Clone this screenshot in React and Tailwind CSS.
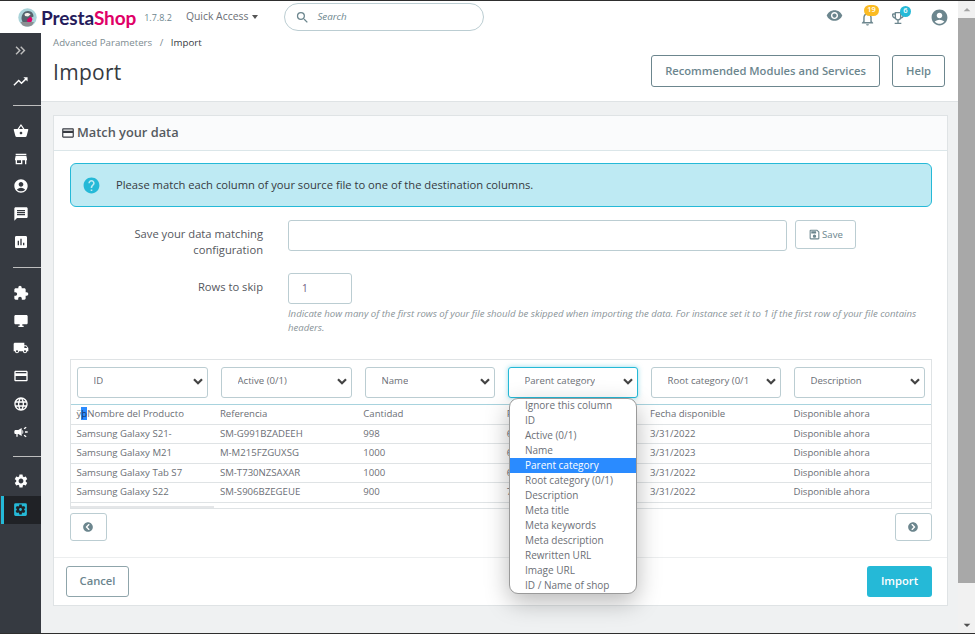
import React from "react";
import {
  MdKeyboardDoubleArrowRight, MdTrendingUp, MdShoppingBasket, MdStore, MdAccountCircle, MdMessage, MdAssessment,
  MdExtension, MdDesktopWindows, MdLocalShipping, MdCreditCard, MdLanguage, MdCampaign, MdSettings, MdSettingsApplications,
  MdVisibility, MdOutlineNotifications, MdOutlineEmojiEvents, MdHelp, MdOutlineSave, MdSearch, MdArrowDropDown, MdArrowDropUp,
} from "react-icons/md";
import { FaChevronCircleLeft, FaChevronCircleRight } from "react-icons/fa";

const font = { fontFamily: '"Open Sans", sans-serif' };

function Logo() {
  return (
    <svg width="19" height="19" viewBox="0 0 19 19" className="shrink-0">
      <circle cx="9.5" cy="9.5" r="9.2" fill="#a9d3d9" />
      <path d="M3.500 11c0-4.500 2.500-8 6.500-8s5.500 3 5.500 5.500c-1 .5-2 1-3 2L10 14H4.500z" fill="#56636d" />
      <path d="M6.500 6c1.500-1.500 4.500-1.500 6 .5L10 8.500 7 8z" fill="#f4f1ea" />
      <path d="M9 11.500l3.500-3 2 2.500-1.500 4H9.500z" fill="#df0067" />
      <path d="M2.500 14h13.500l-1.800 3.200c-3 1.800-7 1.800-9.800 0z" fill="#8c8f92" />
    </svg>
  );
}

function Chevron() {
  return (
    <svg width="10" height="7" viewBox="0 0 10 7" className="shrink-0">
      <path d="M1 1.300L5 5.300L9 1.300" fill="none" stroke="#444" strokeWidth="2.200" />
    </svg>
  );
}

const sideGroups = [
  [MdShoppingBasket, MdStore, MdAccountCircle, MdMessage, MdAssessment],
  [MdExtension, MdDesktopWindows, MdLocalShipping, MdCreditCard, MdLanguage, MdCampaign],
];

function SideIcon({ Icon }) {
  return (
    <div className="h-[27.800px] flex items-center justify-center">
      <Icon className="text-white" size={16} />
    </div>
  );
}

function Sidebar() {
  return (
    <aside className="w-[41px] shrink-0 bg-[#363a41] flex flex-col">
      <div className="h-[33px] mt-[1px] flex items-center justify-center">
        <MdKeyboardDoubleArrowRight className="text-[#bebebe]" size={17} />
      </div>
      <div className="h-[28px] flex items-center justify-center">
        <MdTrendingUp className="text-white" size={17} />
      </div>
      <div className="h-[1px] bg-[#bebebe] ml-[13px] mt-[10px] mb-[11px]" />
      {sideGroups[0].map((I, i) => <SideIcon key={i} Icon={I} />)}
      <div className="h-[1px] bg-[#bebebe] ml-[13px] mt-[11px] mb-[11px]" />
      {sideGroups[1].map((I, i) => <SideIcon key={i} Icon={I} />)}
      <div className="h-[1px] bg-[#bebebe] ml-[13px] mt-[10px] mb-[10px]" />
      <SideIcon Icon={MdSettings} />
      <div className="h-[28px] mt-[1px] ml-[1px] bg-[#202226] border-l-[3px] border-[#25b9d7] flex items-center justify-center pr-[4px]">
        <MdSettingsApplications className="text-[#25b9d7]" size={17} />
      </div>
    </aside>
  );
}

function Header() {
  return (
    <header className="h-[32px] shrink-0 bg-white flex items-center relative">
      <div className="ml-[18px] flex items-center">
        <Logo />
        <span className="ml-[4px] text-[19px] font-bold tracking-[-0.1px] leading-none" style={{ fontFamily: "Lato, sans-serif" }}>
          <span className="text-[#251b5b]">Presta</span><span className="text-[#df0067]">Shop</span>
        </span>
      </div>
      <span className="ml-[8px] text-[9px] text-[#6c868e] mt-[2px]">1.7.8.2</span>
      <span className="ml-[14px] text-[10.400px] text-[#6c6f76] flex items-center">
        Quick Access
        <span className="ml-[4px] w-0 h-0 border-x-[3.500px] border-x-transparent border-t-[4px] border-t-[#555]" />
      </span>
      <div className="ml-[26px] w-[200px] h-[28px] rounded-full border border-[#bbcdd2] flex items-center pl-[10px]">
        <MdSearch className="text-[#6c868e]" size={15} />
        <span className="ml-[7px] mt-[1px] text-[9.800px] italic text-[#6c868e]">Search</span>
      </div>
      <div className="ml-auto flex items-center mr-[9px] text-[#6c868e]">
        <MdVisibility size={17} className="mr-[16px] -mt-[3px]" />
        <div className="relative mr-[14px] mt-[2px]">
          <MdOutlineNotifications size={17} />
          <span className="absolute -top-[5px] left-[5px] w-[15px] h-[11px] rounded-full bg-[#fbbb22] text-white text-[7.500px] font-semibold flex items-center justify-center">19</span>
        </div>
        <div className="relative mr-[24px] mt-[1px]">
          <MdOutlineEmojiEvents size={16} />
          <span className="absolute -top-[4px] left-[10px] w-[11px] h-[11px] rounded-full bg-[#25b9d7] text-white text-[7.500px] font-semibold flex items-center justify-center">6</span>
        </div>
        <MdAccountCircle size={19} />
      </div>
    </header>
  );
}

function PageHead() {
  return (
    <div className="h-[69px] shrink-0 bg-white border-b border-[#dfe3e5] flex justify-between pl-[12px] pr-[13px]">
      <div>
        <div className="mt-[3px] text-[9.700px] leading-[14px] text-[#7d8b91]">
          Advanced Parameters <span className="mx-[5px]">/</span> <span className="text-[#363a41]">Import</span>
        </div>
        <h1 className="mt-[8px] text-[21px] leading-[28px] text-[#363a41] tracking-[0.3px]">Import</h1>
      </div>
      <div className="flex gap-[12px] mt-[22px]">
        <button className="w-[229px] h-[32px] rounded-[3px] border border-[#6c868e] text-[11.200px] font-semibold text-[#6c868e]">Recommended Modules and Services</button>
        <button className="w-[53px] h-[32px] rounded-[3px] border border-[#6c868e] text-[11.200px] font-semibold text-[#6c868e]">Help</button>
      </div>
    </div>
  );
}

function Select({ label, active, w }) {
  return (
    <div className={`h-[31px] ${w} rounded-[3px] bg-white border flex items-center justify-between pl-[15.500px] pr-[4px] pb-[1px] text-[9.600px] text-[#6c6f76] ${active ? "border-[#25b9d7] shadow-[0_0_5px_rgba(37,185,215,0.5)]" : "border-[#bbcdd2]"}`}>
      <span className="whitespace-nowrap overflow-hidden">{label}</span>
      <span className="ml-[8px] shrink-0"><Chevron /></span>
    </div>
  );
}

const rows = [
  ["Samsung Galaxy S21-", "SM-G991BZADEEH", "998", "6", "3/31/2022", "Disponible ahora"],
  ["Samsung Galaxy M21", "M-M215FZGUXSG", "1000", "6", "3/31/2023", "Disponible ahora"],
  ["Samsung Galaxy Tab S7", "SM-T730NZSAXAR", "1000", "6", "3/31/2022", "Disponible ahora"],
  ["Samsung Galaxy S22", "SM-S906BZEGEUE", "900", "7", "3/31/2022", "Disponible ahora"],
];

const options = ["Ignore this column", "ID", "Active (0/1)", "Name", "Parent category", "Root category (0/1)", "Description", "Meta title", "Meta keywords", "Meta description", "Rewritten URL", "Image URL", "ID / Name of shop"];

function Row({ cells }) {
  return (
    <div className="grid grid-cols-[repeat(6,143.400px)] h-[19.500px] border-b border-[#dfe3e5] items-center pl-[5.500px] text-[9.600px] text-[#6c6f76] whitespace-nowrap">
      {cells.map((c, i) => <div key={i}>{c}</div>)}
    </div>
  );
}

function DataTable() {
  return (
    <div className="mt-[24px] ml-[16px] mr-[15px] relative">
      <div className="border border-[#dfe3e5] h-[150px] relative overflow-hidden">
        <div className="h-[45px] border-b border-[#a8d3de] flex items-center justify-between px-[6px]">
          <Select w="w-[131px]" label="ID" />
          <Select w="w-[131px]" label="Active (0/1)" />
          <Select w="w-[130px]" label="Name" />
          <Select w="w-[130px]" label="Parent category" active />
          <Select w="w-[130px]" label="Root category (0/1" />
          <Select w="w-[131px]" label="Description" />
        </div>
        <Row cells={[<span><span>ÿ</span><span className="inline-block leading-[13px] bg-[#2a8bff] text-[#1a3a6a]">þ</span>Nombre del Producto</span>, "Referencia", "Cantidad", "P", "Fecha disponible", "Disponible ahora"]} />
        {rows.map((r, i) => <Row key={i} cells={r} />)}
        <div className="absolute left-0 bottom-0 w-[143px] h-[2px] bg-[#e4e6e8]" />
      </div>
      <div className="absolute z-10 left-[438.500px] top-[39px] w-[128.500px] h-[195.500px] bg-white rounded-[9px] border border-[#9a9a9a] shadow-[0_8px_24px_rgba(0,0,0,0.28)] overflow-hidden text-[10px] text-[#6c6f76]">
        <div className="-mt-[1px] -ml-[1px]">
          {options.map((o) => (
            <div key={o} className={`h-[15px] leading-[15px] pl-[16.500px] whitespace-nowrap ${o === "Parent category" ? "bg-[#2a8bff] text-white" : ""}`}>{o}</div>
          ))}
        </div>
      </div>
    </div>
  );
}

function Card() {
  return (
    <section className="mt-[13px] ml-[12px] mr-[10px] h-[491px] bg-white border border-[#dfe3e5] flex flex-col">
      <div className="h-[35px] shrink-0 bg-[#fafbfc] border-b border-[#dbe6e9] flex items-center pl-[7px] text-[#363a41]">
        <MdCreditCard size={14} />
        <span className="ml-[2px] text-[12.800px] font-semibold text-[#555a60]">Match your data</span>
      </div>
      <div className="mt-[12px] ml-[16px] mr-[15px] h-[44px] shrink-0 rounded-[6px] bg-[#beeaf3] border border-[#25b9d7] flex items-center pl-[11px]">
        <MdHelp size={19} className="text-[#25b9d7]" />
        <span className="ml-[15px] text-[11.200px] text-[#363a41]">Please match each column of your source file to one of the destination columns.</span>
      </div>
      <div className="mt-[13px] flex items-start">
        <label className="w-[209px] text-right text-[11.200px] leading-[16px] text-[#55585e] pt-[6px]">Save your data matching<br />configuration</label>
        <div className="ml-[25px] w-[499px] h-[31px] rounded-[3px] border border-[#bbcdd2]" />
        <button className="ml-[8px] w-[61px] h-[29px] rounded-[3px] border border-[#bbcdd2] flex items-center justify-center text-[9.600px] text-[#6c868e]">
          <MdOutlineSave size={13} className="mr-[1px]" /><span className="mt-[1px]">Save</span>
        </button>
      </div>
      <div className="mt-[15px] flex items-start">
        <label className="w-[209px] text-right text-[11.200px] leading-[16px] text-[#55585e] pt-[6px]">Rows to skip</label>
        <div className="ml-[25px]">
          <div className="w-[64px] h-[31px] rounded-[3px] border border-[#bbcdd2] flex items-center pl-[13px] text-[10px] text-[#6c5a80]">1</div>
        </div>
      </div>
      <p className="mt-[3px] ml-[234px] mr-[30px] text-[9.600px] leading-[14px] italic text-[#8a9499]">
        Indicate how many of the first rows of your file should be skipped when importing the data. For instance set it to 1 if the first row of your file contains headers.
      </p>
      <DataTable />
      <div className="mt-[4px] ml-[16px] mr-[15px] flex justify-between">
        <button className="w-[37px] h-[28px] rounded-[3px] border border-[#bbcdd2] flex items-center justify-center pr-[1px] text-[#6c868e]"><FaChevronCircleLeft size={10} /></button>
        <button className="w-[37px] h-[28px] rounded-[3px] border border-[#bbcdd2] flex items-center justify-center pr-[1px] text-[#6c868e]"><FaChevronCircleRight size={10} /></button>
      </div>
      <div className="mt-[16px] flex-1 border-t border-[#eceeef] flex items-start justify-between pt-[8px] pl-[12px] pr-[15px]">
        <button className="w-[63px] h-[31px] rounded-[3px] border border-[#8fa5ab] text-[11.200px] font-semibold text-[#6c868e]">Cancel</button>
        <button className="w-[65px] h-[31px] rounded-[3px] bg-[#25b9d7] text-[11.200px] font-semibold text-white">Import</button>
      </div>
    </section>
  );
}

function Scrollbar() {
  return (
    <div className="w-[17px] shrink-0 bg-[#f1f1f1] flex flex-col items-center">
      <div className="h-[17px] flex items-center justify-center"><MdArrowDropUp size={16} className="text-[#a3a3a3]" /></div>
      <div className="w-full h-[565px] bg-[#a8a8a8]" />
      <div className="flex-1" />
      <div className="h-[17px] flex items-center justify-center"><MdArrowDropDown size={16} className="text-[#505050]" /></div>
    </div>
  );
}

export default function App() {
  return (
    <div className="w-[975px] h-[634px] overflow-hidden flex flex-col bg-white" style={font}>
      <div className="flex-1 min-h-0 flex border-y border-[#2e2e2e]">
        <div className="flex-1 min-w-0 flex flex-col">
          <Header />
          <div className="flex-1 min-h-0 flex">
            <Sidebar />
            <main className="flex-1 min-w-0 bg-[#eff1f2] flex flex-col">
              <PageHead />
              <Card />
            </main>
          </div>
        </div>
        <Scrollbar />
      </div>
    </div>
  );
}
